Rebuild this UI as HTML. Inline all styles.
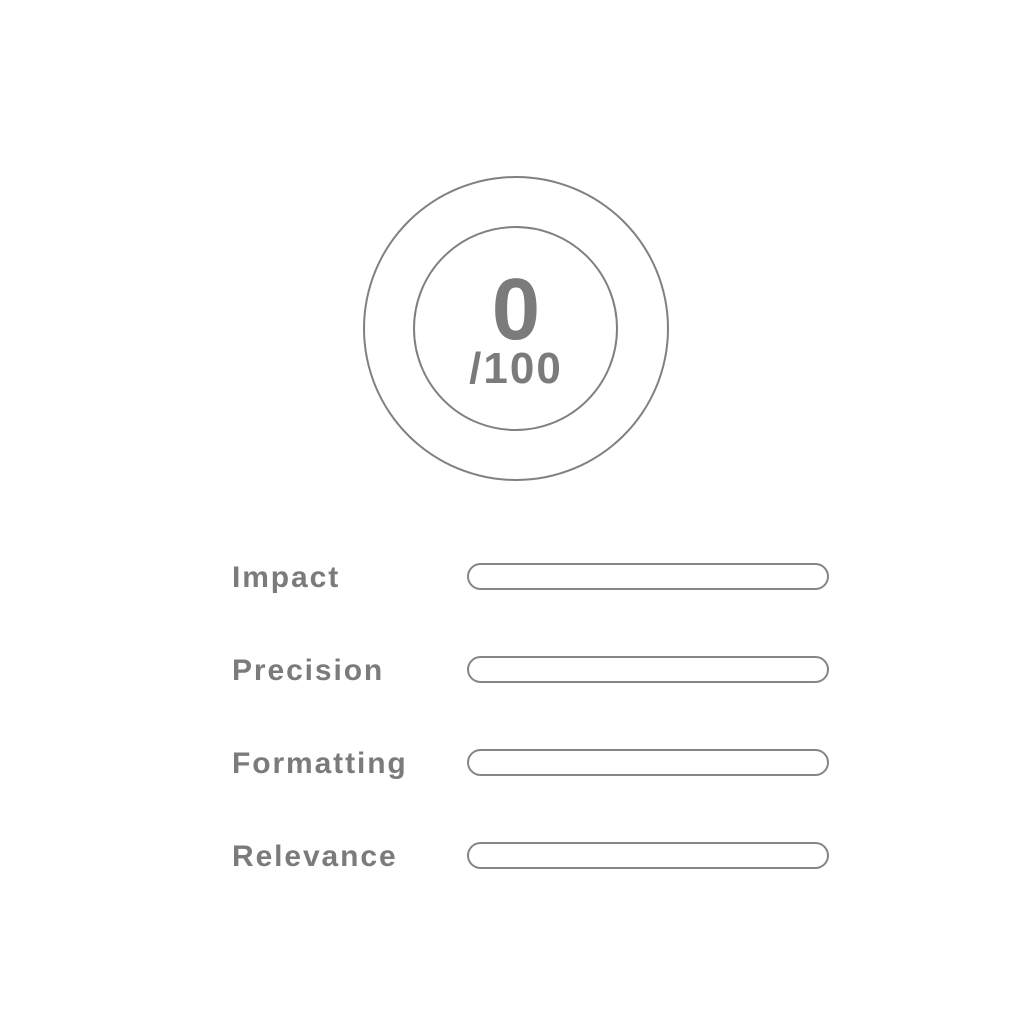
<!DOCTYPE html>
<html><head><style>
html,body{margin:0;padding:0;background:#fff;width:1032px;height:1032px;overflow:hidden;font-family:"Liberation Sans",sans-serif;color:#7b7b7b}
.c{position:absolute;border:2px solid #808080;border-radius:50%;box-sizing:border-box}
.t{position:absolute;font-weight:bold;text-align:center;width:300px;left:366px}
.l{position:absolute;left:232px;font-size:30px;font-weight:bold;line-height:30px;letter-spacing:1.9px}
.b{position:absolute;left:467px;width:362px;height:27px;border:2px solid #858585;border-radius:14px;box-sizing:border-box}
</style></head><body>
<div class="c" style="left:363px;top:176px;width:306px;height:305px"></div>
<div class="c" style="left:413px;top:226px;width:205px;height:205px"></div>
<div class="t" style="top:266px;font-size:87px;line-height:87px">0</div>
<div class="t" style="top:347px;font-size:44px;line-height:44px;letter-spacing:2px">/100</div>
<div class="l" style="top:563px">Impact</div><div class="b" style="top:563px"></div>
<div class="l" style="top:656px">Precision</div><div class="b" style="top:656px"></div>
<div class="l" style="top:749px">Formatting</div><div class="b" style="top:749px"></div>
<div class="l" style="top:842px">Relevance</div><div class="b" style="top:842px"></div>
</body></html>
